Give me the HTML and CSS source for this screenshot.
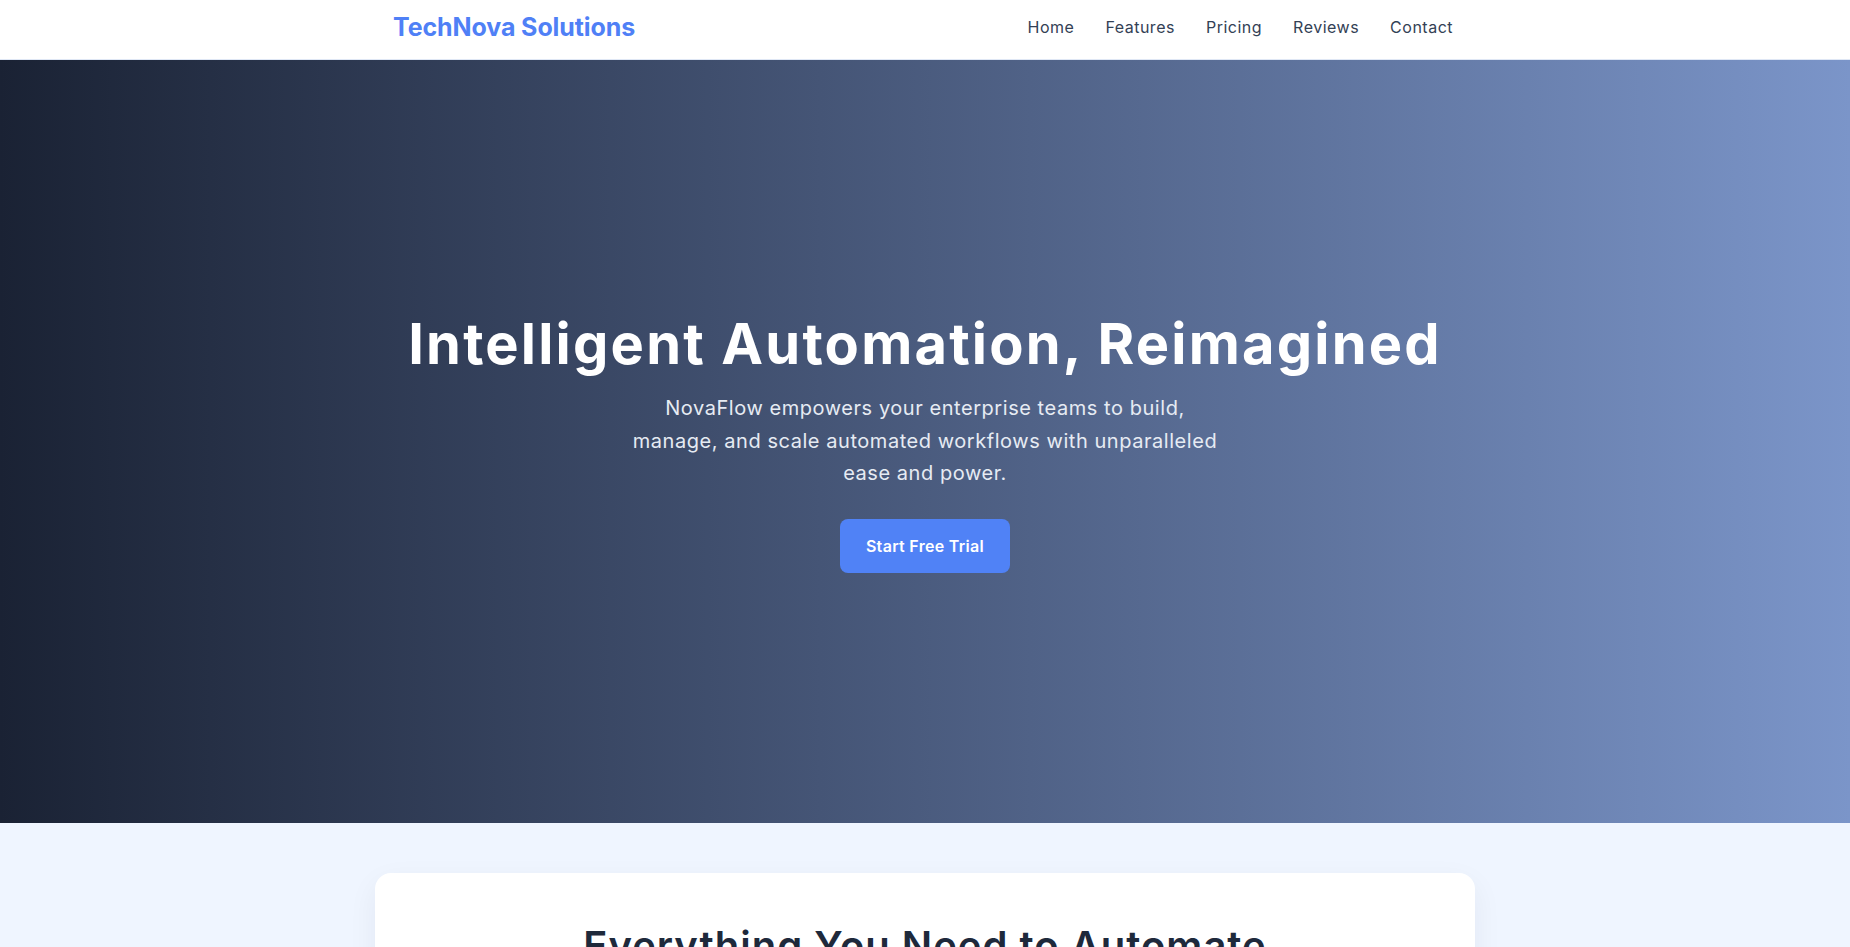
FILE: index.html
```html
<!DOCTYPE html>
<html lang="en">
<head>
<meta charset="utf-8">
<title>TechNova Solutions</title>
<link rel="stylesheet" href="styles.css">
</head>
<body>
<header class="site-header">
  <div class="header-inner">
    <a class="logo" href="#">TechNova Solutions</a>
    <nav class="main-nav">
      <a href="#">Home</a>
      <a href="#">Features</a>
      <a href="#">Pricing</a>
      <a href="#">Reviews</a>
      <a href="#">Contact</a>
    </nav>
  </div>
</header>
<section class="hero">
  <h1 class="hero-title">Intelligent Automation, Reimagined</h1>
  <p class="hero-text">NovaFlow empowers your enterprise teams to build, manage, and scale automated workflows with unparalleled ease and power.</p>
  <a class="btn-primary" href="#">Start Free Trial</a>
</section>
<section class="features">
  <div class="features-card">
    <h2 class="features-title">Everything You Need to Automate</h2>
  </div>
</section>
</body>
</html>
```

FILE: styles.css
```css
* { box-sizing: border-box; }
html, body { margin: 0; padding: 0; }
body {
  font-family: "Inter", "Open Sans", sans-serif;
  background: #eff5ff;
  color: #1e293b;
}
a { text-decoration: none; }

.site-header {
  background: #ffffff;
  border-bottom: 1px solid #dfe7f5;
  height: 60px;
}
.header-inner {
  max-width: 1100px;
  margin: 0 auto;
  padding: 0 22px 5px 18px;
  height: 100%;
  display: flex;
  align-items: center;
  justify-content: space-between;
}
.logo {
  font-size: 25px;
  font-weight: 700;
  color: #4f80f6;
  letter-spacing: -0.1px;
}
.main-nav {
  display: flex;
  gap: 31px;
}
.main-nav a {
  font-size: 16px;
  color: #334155;
  letter-spacing: 0.5px;
}

.hero {
  height: 763px;
  background: linear-gradient(90deg, #1a2234 0%, #7b95c9 100%);
  display: flex;
  flex-direction: column;
  align-items: center;
  justify-content: center;
  text-align: center;
  color: #ffffff;
  padding-top: 1px;
}
.hero-title {
  margin: 0 0 14px;
  font-size: 56px;
  font-weight: 700;
  line-height: 1.2;
  letter-spacing: 2.2px;
}
.hero-text {
  margin: 0 0 29px;
  max-width: 602px;
  font-size: 20px;
  line-height: 32.5px;
  letter-spacing: 0.55px;
  color: #e6ebf3;
}
.btn-primary {
  display: inline-flex;
  align-items: center;
  justify-content: center;
  width: 170px;
  height: 54px;
  background: #5082f6;
  color: #ffffff;
  border-radius: 8px;
  font-size: 16px;
  font-weight: 600;
  letter-spacing: 0.3px;
}

.features {
  padding: 50px 0 60px;
}
.features-card {
  max-width: 1100px;
  margin: 0 auto;
  background: #ffffff;
  border-radius: 16px;
  box-shadow: 0 10px 30px rgba(30, 41, 59, 0.06);
  padding: 48px 48px 60px;
}
.features-title {
  margin: 0;
  text-align: center;
  font-size: 40px;
  font-weight: 600;
  letter-spacing: 1px;
  color: #1e293b;
}
```
